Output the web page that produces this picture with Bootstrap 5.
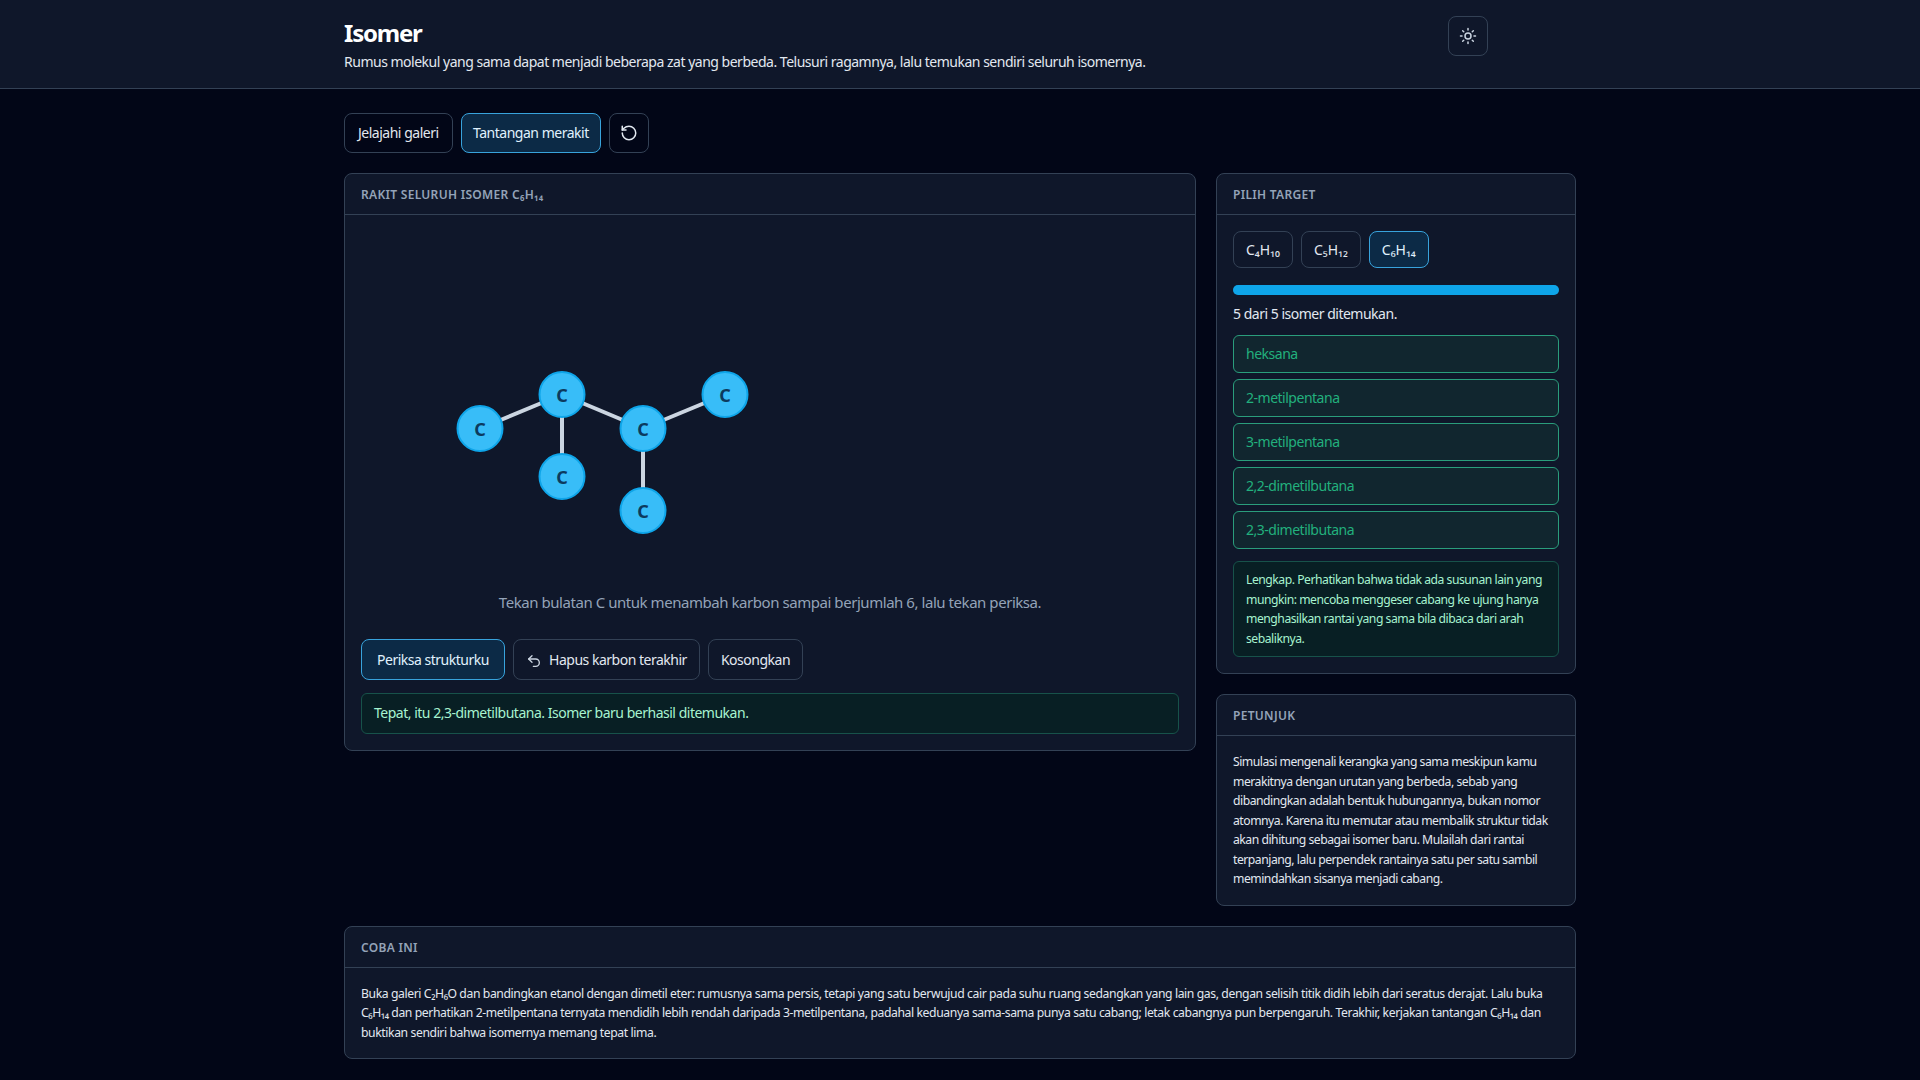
<!DOCTYPE html>
<html lang="id">
<head>
    <meta charset="UTF-8">
    <meta name="viewport" content="width=device-width, initial-scale=1.0">
    <title>Isomer</title>
    <link href="https://cdn.jsdelivr.net/npm/bootstrap@5.3.0/dist/css/bootstrap.min.css" rel="stylesheet">
    <style>
        body {
            background-color: #020617;
            color: #e2e8f0;
            font-family: "Noto Sans", sans-serif;
            font-size: 14px;
            letter-spacing: -0.035em;
        }
        .top-bar {
            height: 89px;
            background-color: #0f172a;
            border-bottom: 1px solid #334155;
        }
        .top-inner, .page-wrap {
            width: 1232px;
            margin: 0 auto;
        }
        .top-inner {
            padding: 20px 88px 0 0;
        }
        .top-inner h1 {
            font-size: 24px;
            font-weight: 700;
            color: #fff;
            letter-spacing: -0.05em;
            margin: 0 0 5px;
            line-height: 26px;
        }
        .top-inner p {
            font-size: 14px;
            line-height: 21px;
            margin: 0;
            color: #e2e8f0;
        }
        .theme-btn {
            width: 40px;
            height: 40px;
            margin-top: -4px;
        }
        .page-wrap {
            padding-top: 24px;
        }
        .btn-dark-line {
            --bs-btn-color: #e2e8f0;
            --bs-btn-border-color: #334155;
            --bs-btn-hover-color: #fff;
            --bs-btn-hover-border-color: #475569;
            --bs-btn-hover-bg: #1e293b;
            --bs-btn-font-size: 14px;
            --bs-btn-padding-x: 12px;
            --bs-btn-border-radius: 8px;
            letter-spacing: -0.035em;
            height: 40px;
            padding-bottom: 8px;
            white-space: nowrap;
        }
        .btn-dark-line.is-on {
            --bs-btn-color: #e0f2fe;
            --bs-btn-bg: #0c2a46;
            --bs-btn-border-color: #38a3dc;
        }
        .btn-dark-line.is-wide {
            --bs-btn-padding-x: 13px;
        }
        .btn-dark-line.is-snug {
            --bs-btn-padding-x: 11.5px;
        }
        .btn-dark-line.is-primary-action {
            --bs-btn-padding-x: 15px;
        }
        .btn-dark-line.is-small {
            --bs-btn-padding-x: 12px;
            height: 37px;
            padding-bottom: 6px;
            letter-spacing: 0;
        }
        .btn-dark-line.is-tall {
            height: 41px;
            padding-bottom: 6px;
        }
        .btn-icon-only {
            width: 40px;
            padding: 0;
        }
        .undo-icon {
            margin-right: 4px;
        }
        .app-grid {
            display: grid;
            grid-template-columns: 852px 360px;
            gap: 20px;
            align-items: start;
        }
        .side-stack {
            gap: 20px;
        }
        .panel-card {
            --bs-card-bg: #0f172a;
            --bs-card-border-color: #334155;
            --bs-card-border-radius: 8px;
            --bs-card-inner-border-radius: 7px;
            --bs-card-cap-bg: transparent;
            --bs-card-cap-padding-y: 0;
            --bs-card-cap-padding-x: 16px;
            --bs-card-spacer-y: 16px;
            --bs-card-spacer-x: 16px;
            --bs-card-color: #e2e8f0;
        }
        .panel-card .card-header {
            height: 41px;
            line-height: 41px;
            font-size: 12px;
            font-weight: 600;
            letter-spacing: 0.025em;
            text-transform: uppercase;
            color: #94a3b8;
        }
        .try-card {
            margin-top: 20px;
        }
        .mol-box {
            height: 356px;
        }
        .mol-box text {
            font-size: 18px;
            font-weight: 700;
            letter-spacing: 0;
            fill: #0c3a5e;
            text-anchor: middle;
            dominant-baseline: central;
        }
        .hint-line {
            color: #94a3b8;
            font-size: 15px;
            letter-spacing: -0.03em;
            line-height: 22px;
            text-align: center;
            margin: 4px 0 26px;
        }
        .good-note {
            background-color: #081f24;
            border: 1px solid #17524a;
            border-radius: 6px;
            color: #a7f3d0;
        }
        .result-note {
            padding: 8px 12px 10px;
            line-height: 21px;
            margin-top: 13px;
        }
        .bar-track {
            --bs-progress-height: 10px;
            --bs-progress-bg: #1e293b;
            --bs-progress-bar-bg: #0ea5e9;
            --bs-progress-border-radius: 5px;
            margin: 17px 0 8px;
        }
        .found-text {
            line-height: 21px;
            margin-bottom: 11px;
        }
        .isomer-item {
            height: 38px;
            line-height: 36px;
            padding: 0 12px;
            margin-bottom: 6px;
            border: 1px solid #2a9d7c;
            border-radius: 6px;
            background-color: #11262f;
            color: #22b07d;
        }
        .done-note {
            font-size: 12.2px;
            line-height: 19.5px;
            letter-spacing: -0.04em;
            padding: 8px 12px;
            margin-top: 12px;
        }
        .small-copy {
            font-size: 12.2px;
            line-height: 19.5px;
            letter-spacing: -0.04em;
            margin: 0;
            color: #e2e8f0;
        }
        .try-copy {
            max-width: 1190px;
            letter-spacing: -0.033em;
        }
    </style>
</head>
<body>
<header class="top-bar">
    <div class="top-inner d-flex justify-content-between align-items-start">
        <div>
            <h1>Isomer</h1>
            <p>Rumus molekul yang sama dapat menjadi beberapa zat yang berbeda. Telusuri ragamnya, lalu temukan sendiri seluruh isomernya.</p>
        </div>
        <button class="btn btn-dark-line btn-icon-only theme-btn d-inline-flex align-items-center justify-content-center" type="button" aria-label="Ganti tema">
            <svg width="18" height="18" viewBox="0 0 24 24" fill="none" stroke="#cbd5e1" stroke-width="2" stroke-linecap="round"><circle cx="12" cy="12" r="4"/><path d="M12 2v2M12 20v2M4.9 4.9l1.4 1.4M17.7 17.7l1.4 1.4M2 12h2M20 12h2M6.3 17.7l-1.4 1.4M19.1 4.9l-1.4 1.4"/></svg>
        </button>
    </div>
</header>
<main class="page-wrap">
    <div class="d-flex gap-2 mb-3 pb-1">
        <button class="btn btn-dark-line is-wide" type="button">Jelajahi galeri</button>
        <button class="btn btn-dark-line is-on is-snug" type="button">Tantangan merakit</button>
        <button class="btn btn-dark-line btn-icon-only d-inline-flex align-items-center justify-content-center" type="button" aria-label="Ulangi">
            <svg width="18" height="18" viewBox="0 0 24 24" fill="none" stroke="#e2e8f0" stroke-width="2" stroke-linecap="round" stroke-linejoin="round"><path d="M3 12a9 9 0 1 0 9-9 9.75 9.75 0 0 0-6.74 2.74L3 8"/><path d="M3 3v5h5"/></svg>
        </button>
    </div>
    <div class="app-grid">
        <section class="card panel-card">
            <div class="card-header">Rakit seluruh isomer C₆H₁₄</div>
            <div class="card-body">
                <div class="mol-box">
                    <svg width="820" height="356" viewBox="0 -0.5 820 356">
                        <g stroke="#cbd5e1" stroke-width="4">
                            <line x1="119" y1="197" x2="201" y2="163"/>
                            <line x1="201" y1="163" x2="282" y2="197"/>
                            <line x1="282" y1="197" x2="364" y2="163"/>
                            <line x1="201" y1="163" x2="201" y2="245"/>
                            <line x1="282" y1="197" x2="282" y2="279"/>
                        </g>
                        <g fill="#38bdf8" stroke="#0ea5e9" stroke-width="2">
                            <circle cx="119" cy="197" r="22.5"/>
                            <circle cx="201" cy="163" r="22.5"/>
                            <circle cx="282" cy="197" r="22.5"/>
                            <circle cx="364" cy="163" r="22.5"/>
                            <circle cx="201" cy="245" r="22.5"/>
                            <circle cx="282" cy="279" r="22.5"/>
                        </g>
                        <text x="119" y="197">C</text>
                        <text x="201" y="163">C</text>
                        <text x="282" y="197">C</text>
                        <text x="364" y="163">C</text>
                        <text x="201" y="245">C</text>
                        <text x="282" y="279">C</text>
                    </svg>
                </div>
                <p class="hint-line">Tekan bulatan C untuk menambah karbon sampai berjumlah 6, lalu tekan periksa.</p>
                <div class="d-flex gap-2">
                    <button class="btn btn-dark-line is-tall is-on is-primary-action" type="button">Periksa strukturku</button>
                    <button class="btn btn-dark-line is-tall" type="button">
                        <svg class="undo-icon" width="16" height="16" viewBox="0 0 24 24" fill="none" stroke="#cbd5e1" stroke-width="2" stroke-linecap="round" stroke-linejoin="round"><path d="M9 14 4 9l5-5"/><path d="M4 9h10.5a5.5 5.5 0 0 1 0 11H11"/></svg>
                        Hapus karbon terakhir
                    </button>
                    <button class="btn btn-dark-line is-tall" type="button">Kosongkan</button>
                </div>
                <div class="good-note result-note">Tepat, itu 2,3-dimetilbutana. Isomer baru berhasil ditemukan.</div>
            </div>
        </section>
        <aside class="d-flex flex-column side-stack">
            <section class="card panel-card">
                <div class="card-header">Pilih target</div>
                <div class="card-body">
                    <div class="d-flex gap-2">
                        <button class="btn btn-dark-line is-small" type="button">C₄H₁₀</button>
                        <button class="btn btn-dark-line is-small" type="button">C₅H₁₂</button>
                        <button class="btn btn-dark-line is-small is-on" type="button">C₆H₁₄</button>
                    </div>
                    <div class="progress bar-track"><div class="progress-bar" style="width: 100%"></div></div>
                    <div class="found-text">5 dari 5 isomer ditemukan.</div>
                    <div class="isomer-item">heksana</div>
                    <div class="isomer-item">2-metilpentana</div>
                    <div class="isomer-item">3-metilpentana</div>
                    <div class="isomer-item">2,2-dimetilbutana</div>
                    <div class="isomer-item">2,3-dimetilbutana</div>
                    <div class="good-note done-note">Lengkap. Perhatikan bahwa tidak ada susunan lain yang mungkin: mencoba menggeser cabang ke ujung hanya menghasilkan rantai yang sama bila dibaca dari arah sebaliknya.</div>
                </div>
            </section>
            <section class="card panel-card">
                <div class="card-header">Petunjuk</div>
                <div class="card-body">
                    <p class="small-copy">Simulasi mengenali kerangka yang sama meskipun kamu merakitnya dengan urutan yang berbeda, sebab yang dibandingkan adalah bentuk hubungannya, bukan nomor atomnya. Karena itu memutar atau membalik struktur tidak akan dihitung sebagai isomer baru. Mulailah dari rantai terpanjang, lalu perpendek rantainya satu per satu sambil memindahkan sisanya menjadi cabang.</p>
                </div>
            </section>
        </aside>
    </div>
    <section class="card panel-card try-card">
        <div class="card-header">Coba ini</div>
        <div class="card-body">
            <p class="small-copy try-copy">Buka galeri C₂H₆O dan bandingkan etanol dengan dimetil eter: rumusnya sama persis, tetapi yang satu berwujud cair pada suhu ruang sedangkan yang lain gas, dengan selisih titik didih lebih dari seratus derajat. Lalu buka C₆H₁₄ dan perhatikan 2-metilpentana ternyata mendidih lebih rendah daripada 3-metilpentana, padahal keduanya sama-sama punya satu cabang; letak cabangnya pun berpengaruh. Terakhir, kerjakan tantangan C₆H₁₄ dan buktikan sendiri bahwa isomernya memang tepat lima.</p>
        </div>
    </section>
</main>
<script src="https://cdn.jsdelivr.net/npm/bootstrap@5.3.0/dist/js/bootstrap.bundle.min.js"></script>
</body>
</html>
